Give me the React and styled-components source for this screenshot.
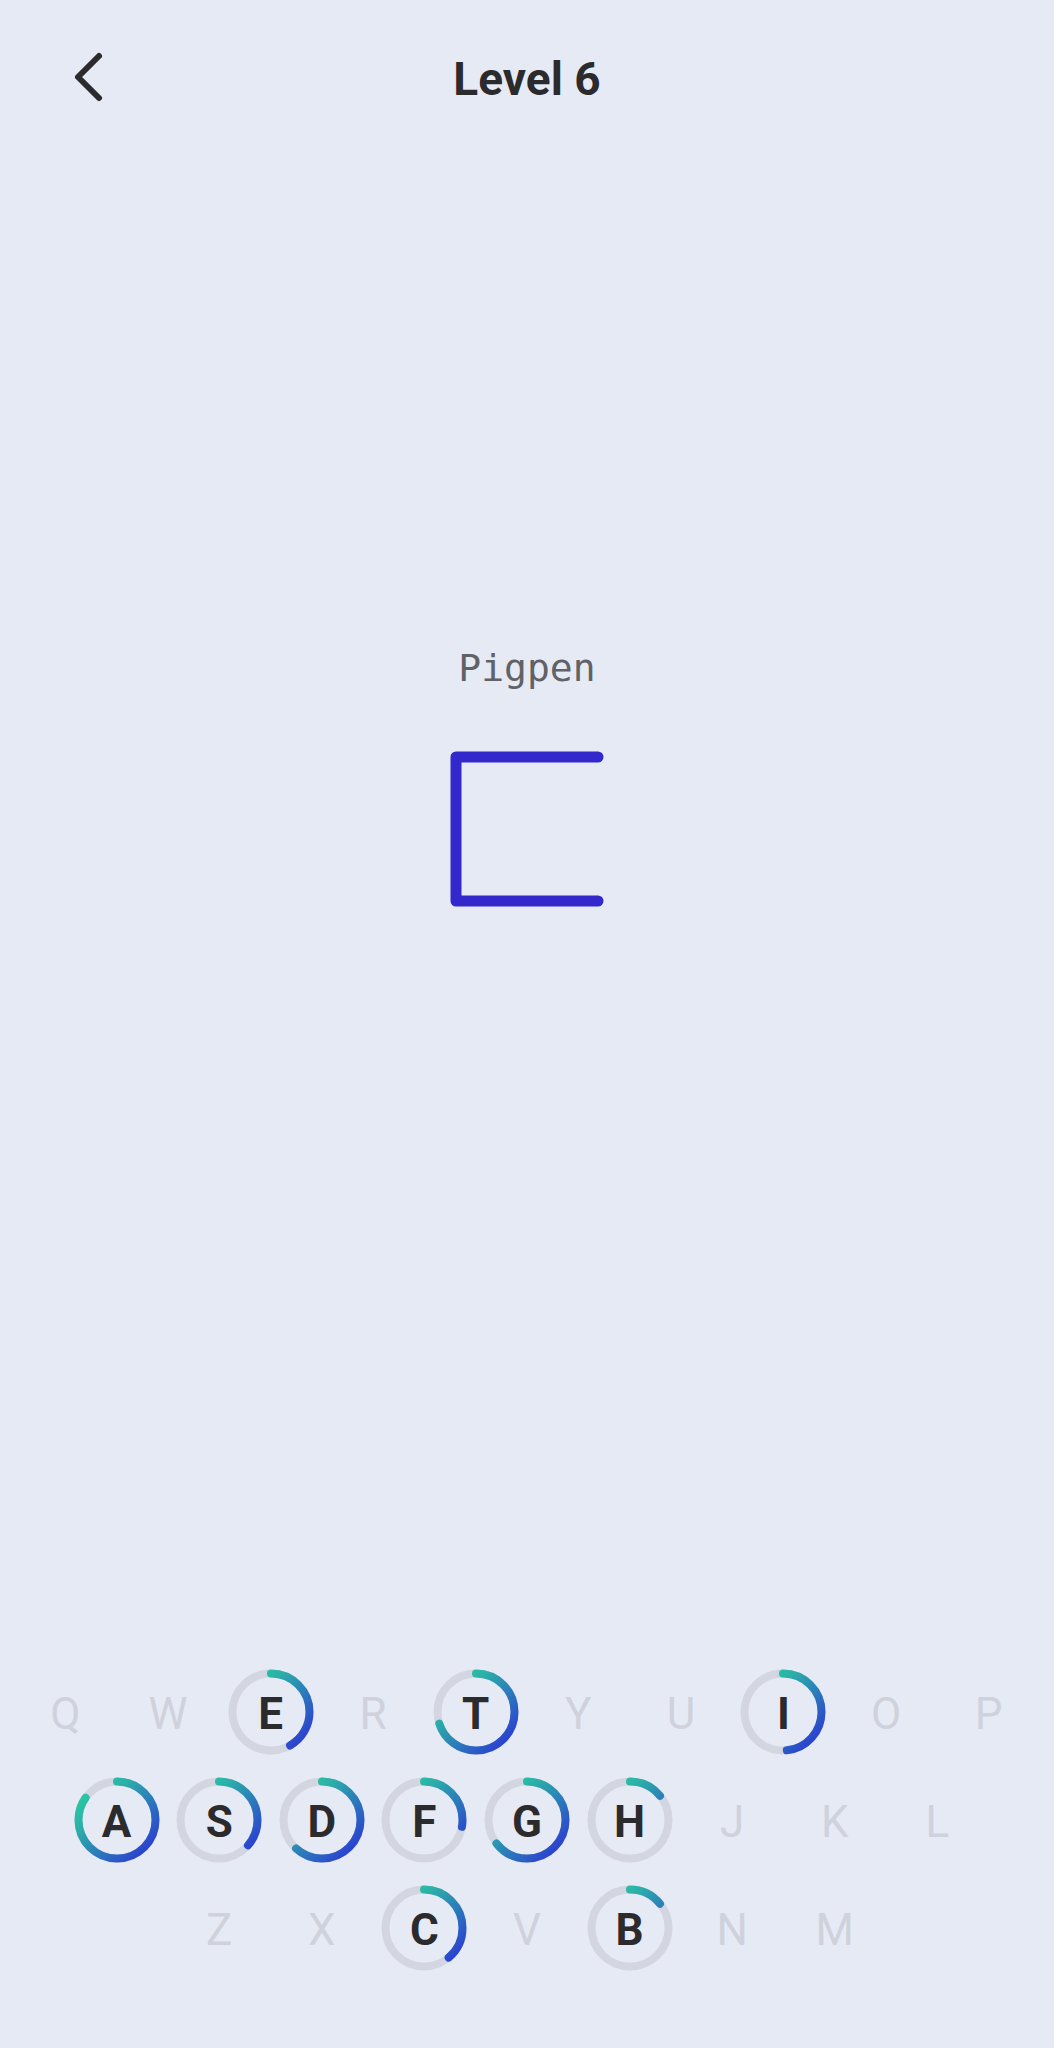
import styled, { createGlobalStyle } from "styled-components";

const GlobalStyle = createGlobalStyle`
    html, body {
        margin: 0;
        padding: 0;
        background: #e6eaf5;
    }
    * {
        box-sizing: border-box;
    }
`;

const colorInk = "#2b2b2e";
const colorMuted = "#cfd2dc";
const colorTrack = "#d3d6e1";

const Page = styled.div`
    min-height: 100vh;
    display: flex;
    flex-direction: column;
    background: #e6eaf5;
    font-family: Roboto, "Liberation Sans", sans-serif;
`;

const Header = styled.header`
    height: 154px;
    display: grid;
    grid-template-columns: 1fr auto 1fr;
    align-items: center;
`;

const BackButton = styled.button`
    justify-self: start;
    margin-left: 64px;
    padding: 0;
    border: none;
    background: transparent;
    width: 44px;
    height: 60px;
    cursor: pointer;

    svg {
        display: block;
    }
`;

const Title = styled.h1`
    margin: 0;
    padding-top: 4px;
    font-size: 46px;
    line-height: 54px;
    font-weight: 700;
    color: ${colorInk};
`;

const Puzzle = styled.section`
    display: flex;
    flex-direction: column;
    align-items: center;
    padding-top: 490px;
    gap: 58px;
`;

const CipherName = styled.div`
    font-family: "DejaVu Sans Mono", "Liberation Mono", monospace;
    font-size: 38px;
    line-height: 48px;
    color: #606267;
`;

const Keyboard = styled.section`
    margin-top: auto;
    padding: 0 14px 66px;
    display: flex;
    flex-direction: column;
`;

const KeyRow = styled.div`
    display: flex;
    justify-content: center;
`;

const Key = styled.div`
    width: 102.6px;
    height: 108px;
    display: grid;
    place-items: center;

    & > * {
        grid-area: 1 / 1;
    }
`;

const Letter = styled.span`
    padding-top: 4px;
    font-size: 44px;
    line-height: 52px;
    font-weight: ${(p) => (p.$active ? 700 : 400)};
    color: ${(p) => (p.$active ? colorInk : colorMuted)};
`;

// degrees of arc drawn for each letter already met
const progress = {
    E: 150, T: 252, I: 174,
    A: 305, S: 131, D: 222, F: 100, G: 232, H: 51,
    C: 140, B: 51,
};

const rows = ["QWERTYUIOP", "ASDFGHJKL", "ZXCVBNM"];

const R = 38.5;
const CIRC = 2 * Math.PI * R;

const Ring = ({ id, degrees }) => (
    <svg width="90" height="90" viewBox="0 0 90 90">
        <defs>
            <linearGradient
                id={id}
                gradientUnits="userSpaceOnUse"
                x1="8"
                y1="8"
                x2="82"
                y2="82"
                gradientTransform="rotate(90 45 45)"
            >
                <stop offset="0" stopColor="#2ad2a0" />
                <stop offset="0.3" stopColor="#2bb0a8" />
                <stop offset="1" stopColor="#2b30d6" />
            </linearGradient>
        </defs>
        <circle cx="45" cy="45" r={R} fill="none" stroke={colorTrack} strokeWidth="8" />
        <circle
            cx="45"
            cy="45"
            r={R}
            fill="none"
            stroke={`url(#${id})`}
            strokeWidth="8"
            strokeLinecap="round"
            strokeDasharray={`${(degrees / 360) * CIRC} ${CIRC}`}
            transform="rotate(-90 45 45)"
        />
    </svg>
);

const App = () => {
    return (
        <Page>
            <GlobalStyle />
            <Header>
                <BackButton aria-label="Back">
                    <svg width="44" height="60" viewBox="0 0 44 60">
                        <path
                            d="M35 9 L14 30 L35 51"
                            fill="none"
                            stroke={colorInk}
                            strokeWidth="6"
                            strokeLinecap="round"
                            strokeLinejoin="round"
                        />
                    </svg>
                </BackButton>
                <Title>Level 6</Title>
                <div />
            </Header>
            <Puzzle>
                <CipherName>Pigpen</CipherName>
                <svg width="160" height="160" viewBox="0 0 160 160">
                    <path
                        d="M151 7 H9 V151 H151"
                        fill="none"
                        stroke="#3328cc"
                        strokeWidth="11"
                        strokeLinecap="round"
                        strokeLinejoin="round"
                    />
                </svg>
            </Puzzle>
            <Keyboard>
                {rows.map((row) => (
                    <KeyRow key={row}>
                        {row.split("").map((ch) => {
                            const deg = progress[ch];
                            return (
                                <Key key={ch}>
                                    {deg !== undefined && <Ring id={`ring-${ch}`} degrees={deg} />}
                                    <Letter $active={deg !== undefined}>{ch}</Letter>
                                </Key>
                            );
                        })}
                    </KeyRow>
                ))}
            </Keyboard>
        </Page>
    );
};

export default App;
